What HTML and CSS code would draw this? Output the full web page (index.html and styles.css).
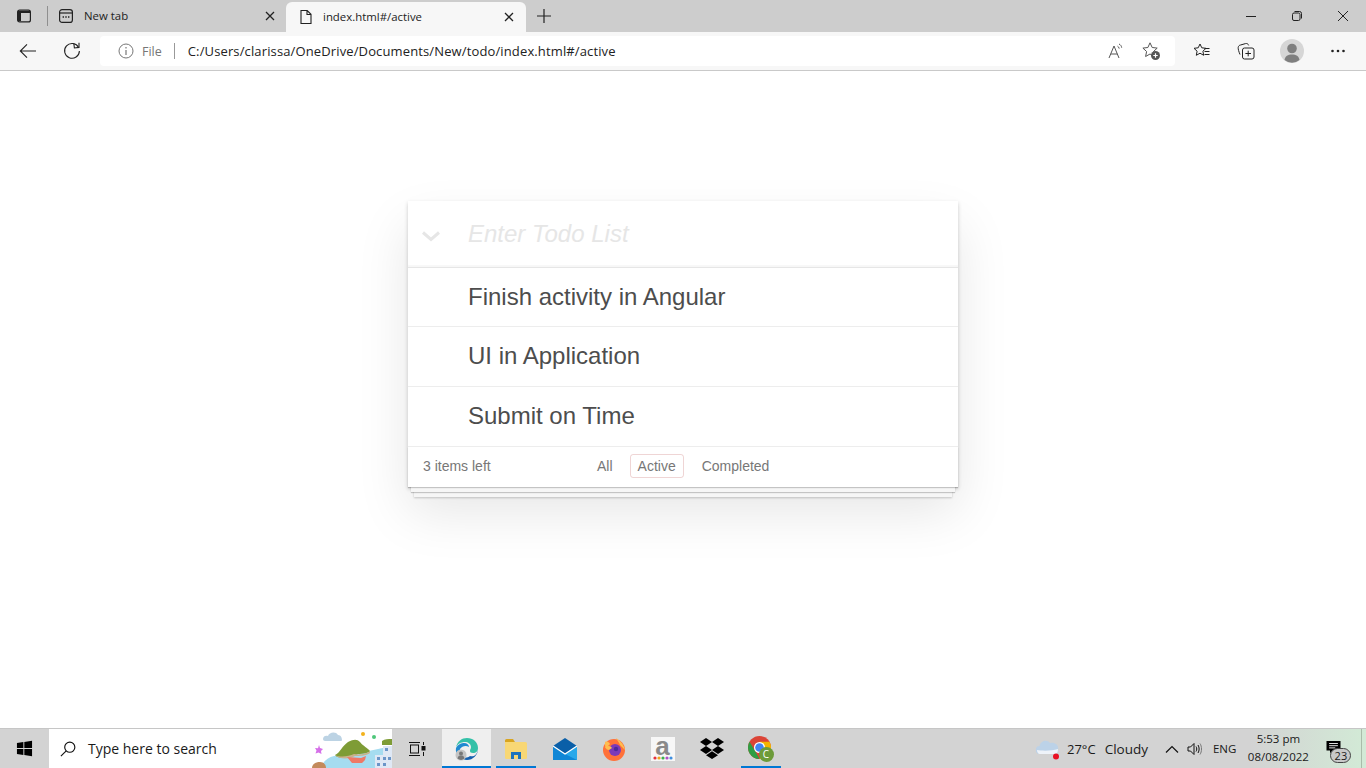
FILE: index.html
```html
<!DOCTYPE html>
<html lang="en">
<head>
  <meta charset="UTF-8">
  <title>index.html#/active</title>
  <link rel="stylesheet" href="styles.css">
</head>
<body>

  <div class="tabbar">
    <div class="tab-tools">
      <svg width="16" height="16" viewBox="0 0 16 16" fill="none" stroke="#222" stroke-width="1.2"><rect x="1.6" y="2.1" width="12.8" height="11.8" rx="2"/><path d="M2 3h12v2H2zM2 5h3v8H2z" fill="#222" stroke="none"/></svg>
    </div>
    <div class="tab-sep"></div>
    <div class="tab">
      <svg width="16" height="16" viewBox="0 0 16 16" fill="none" stroke="#222" stroke-width="1.2"><rect x="1.6" y="1.6" width="12.8" height="12.8" rx="2.5"/><path d="M1.6 5h12.8"/><path d="M4.6 9h1.4M7.3 9h1.4M10 9h1.4" stroke-width="1.6"/></svg>
      <span class="tab-name">New tab</span>
      <svg class="tab-x" width="10" height="10" viewBox="0 0 10 10" stroke="#222" stroke-width="1.3"><path d="M1 1l8 8M9 1l-8 8"/></svg>
    </div>
    <div class="tab active">
      <svg width="16" height="16" viewBox="0 0 16 16" fill="none" stroke="#222" stroke-width="1.1"><path d="M3 1.5h6.2L13 5.3v9.2H3zM9 1.5v4h4"/></svg>
      <span class="tab-name">index.html#/active</span>
      <svg class="tab-x" width="10" height="10" viewBox="0 0 10 10" stroke="#222" stroke-width="1.3"><path d="M1 1l8 8M9 1l-8 8"/></svg>
    </div>
    <svg class="tab-new" width="16" height="16" viewBox="0 0 16 16" stroke="#222" stroke-width="1.2"><path d="M8 1v14M1 8h14"/></svg>
    <div class="win-btns">
      <svg width="12" height="12" viewBox="0 0 12 12" stroke="#222" fill="none"><path d="M1 6.5h10"/></svg>
      <svg width="12" height="12" viewBox="0 0 12 12" stroke="#222" fill="none"><rect x="1.5" y="3" width="7.5" height="7.5" rx="1.5"/><path d="M3.5 1.5h5a2 2 0 0 1 2 2v5"/></svg>
      <svg width="12" height="12" viewBox="0 0 12 12" stroke="#222" fill="none"><path d="M1 1l10 10M11 1L1 11"/></svg>
    </div>
  </div>

  <div class="toolbar">
    <button class="nav-btn">
      <svg width="18" height="18" viewBox="0 0 18 18" fill="none" stroke="#222" stroke-width="1.1"><path d="M17 9H1.5M8 2.3L1.3 9 8 15.7"/></svg>
    </button>
    <button class="nav-btn">
      <svg width="18" height="18" viewBox="0 0 18 18" fill="none" stroke="#222" stroke-width="1.1"><path d="M15.6 5.5A7.4 7.4 0 1 0 16.4 9"/><path d="M10.8 1.2l.6 4.8 4.6-.6V.7"/></svg>
    </button>
    <div class="addressbar">
      <svg class="info" width="16" height="16" viewBox="0 0 16 16" fill="none" stroke="#777"><circle cx="8" cy="8" r="7"/><path d="M8 7v5M8 4v1.6" stroke-width="1.2"/></svg>
      <span class="file">File</span>
      <span class="addr-sep"></span>
      <span class="url">C:/Users/clarissa/OneDrive/Documents/New/todo/index.html#/active</span>
      <svg class="read" width="16" height="16" viewBox="0 0 16 16" fill="none" stroke="#555"><path d="M1 15L6 3l5 12M2.8 11h6.4"/><path d="M9.500 3.200c1 .5 1.500 1.200 1.700 2.400M11 1c1.600.8 2.500 2 2.700 3.700"/></svg>
      <svg class="star-add" width="20" height="20" viewBox="0 0 20 20" fill="none" stroke="#555"><path d="M9 1.800l2.200 4.700 5 .6-3.700 3.400 1 5-4.500-2.500-4.400 2.500 1-5L1.900 7.100l5-.6z"/><circle cx="14.500" cy="14.500" r="4.500" fill="#555" stroke="none"/><path d="M12.300 14.500h4.400M14.500 12.300v4.400" stroke="#fff" stroke-width="1.200"/></svg>
    </div>
    <div class="tool-icons">
      <svg width="18" height="18" viewBox="0 0 18 18" fill="none" stroke="#222"><path d="M7 2l1.800 3.800 4.200.5-3.100 2.900.8 4.100L7 11.200l-3.700 2.100.8-4.100L1 6.300l4.200-.5z"/><path d="M11.500 6.500h5M11.500 9.500h5M11.500 12.500h5"/></svg>
      <svg width="18" height="18" viewBox="0 0 18 18" fill="none" stroke="#222"><path d="M3 12.500C1.800 9.500 1 7 1.200 5.500c.2-1.500 1-2.200 2.300-2.500l5-1.400c1.500-.3 2.600.2 3.200 1.800"/><rect x="5.500" y="6" width="11.500" height="11" rx="2"/><path d="M11.200 8.700v5.600M8.400 11.500H14"/></svg>
      <svg class="avatar" width="24" height="24" viewBox="0 0 24 24"><circle cx="12" cy="12" r="12" fill="#d6d6d6"/><circle cx="12" cy="9.500" r="4.800" fill="#7f7f7f"/><path d="M4.500 21c.6-3.800 3.400-5.500 7.500-5.500s6.900 1.700 7.500 5.500A12 12 0 0 1 4.500 21z" fill="#7f7f7f"/></svg>
      <svg width="16" height="16" viewBox="0 0 16 16" fill="#222"><circle cx="2.500" cy="8" r="1.300"/><circle cx="8" cy="8" r="1.300"/><circle cx="13.500" cy="8" r="1.300"/></svg>
    </div>
  </div>

  <main class="page">
    <section class="todoapp">
      <header class="todo-head">
        <svg class="toggle-all" width="20" height="11" viewBox="0 0 20 11" fill="none" stroke="#e6e6e6" stroke-width="3"><path d="M2 1.500l8 7 8-7"/></svg>
        <span class="placeholder">Enter Todo List</span>
      </header>
      <ul class="todo-list">
        <li>Finish activity in Angular</li>
        <li>UI in Application</li>
        <li>Submit on Time</li>
      </ul>
      <footer class="todo-foot">
        <span class="count">3 items left</span>
        <ul class="filters">
          <li><a href="#/">All</a></li>
          <li><a href="#/active" class="selected">Active</a></li>
          <li><a href="#/completed">Completed</a></li>
        </ul>
      </footer>
    </section>
  </main>

  <div class="taskbar">
    <div class="start">
      <svg width="17" height="17" viewBox="0 0 18 18" fill="#000"><path d="M1 3.200l6.800-1v6.300H1zM8.800 2l8.200-1.200v7.700H8.800zM1 9.500h6.800v6.300l-6.800-1zM8.800 9.500H17v7.700L8.800 16z"/></svg>
    </div>
    <div class="search">
      <svg width="16" height="16" viewBox="0 0 18 18" fill="none" stroke="#111" stroke-width="1.300"><circle cx="11" cy="7" r="5.700"/><path d="M7 11.200L1 17"/></svg>
      <span class="search-text">Type here to search</span>
      <svg class="search-art" width="84" height="39" viewBox="0 0 84 39">
        <path d="M15 10c0-3 3-4 5-3 1-4 8-5 10-1 3 0 4 3 4 5 0 1-1 1-2 1H17c-1 0-2-1-2-2z" fill="#bcd3e4"/>
        <path d="M11 16l1 3 3 1-2 2 .5 3-3-1.500-3 1 1-3-1.500-2.500 3 .2z" fill="#d56fe8"/>
        <circle cx="55" cy="5" r="2" fill="#f2b21c"/><circle cx="66" cy="8" r="2" fill="#4ec77a"/>
        <path d="M12 39c3-6 8-11 14-12l30-4 28-6v22z" fill="#a5dcf0"/>
        <path d="M27 26c5-2 7-9 13-13 6-3 9-3 12 0 3 4 8 6 10 9-1 2-7 3-12 3-3 2-8 3-12 3-4 1-9 1-11-2z" fill="#7e9c36"/>
        <path d="M27 26c6 3 14 1 19-1 5 1 13 0 16-3v2c-4 3-11 3-15 3-5 3-15 4-20-1z" fill="#c9b28c"/>
        <path d="M39 28l14 1 5-2-1 4-3 3H44z" fill="#ee7966"/>
        <path d="M74 12c3-2 6-2 10-2v6H74z" fill="#7e9c36"/>
        <path d="M4 39c0-4 4-6 8-6s6 3 6 6z" fill="#c38a5c"/>
        <path d="M67 26h8v-9h9v22H67z" fill="#dfe8f5"/><path d="M77 19h3v3h-3zM69 28h3v3h-3zM75 28h3v3h-3zM80 28h3v3h-3zM69 34h3v3h-3zM75 34h3v3h-3z" fill="#6b95c8"/>
      </svg>
    </div>
    <div class="taskview">
      <svg width="18" height="16" viewBox="0 0 18 16" fill="none" stroke="#111"><path d="M1 1.500h11M1 14.500h11"/><rect x="2.500" y="4" width="8" height="8"/><path d="M15.500 1v3M15.500 11v4"/><rect x="14" y="5.500" width="3" height="3.500" fill="#111"/></svg>
    </div>
    <div class="task-slot current">
      <svg width="24" height="24" viewBox="0 0 24 24">
        <path d="M1 11C2 4 7 1 12 1c6 0 11 4 11 10 0 3-2 5-5 5-2 0-3-1-3-2 0-2 1-2 1-4 0-3-3-5-6-5-4 0-8 2-9 6z" fill="#34c1a8"/>
        <path d="M23 12c0 6-5 11-11 11-3 0-5-1-6-3 3 1 7 1 9-1 3 1 7 0 8-7z" fill="#1560b0"/>
        <path d="M1 11c2-4 6-5 8-5 3 0 5 2 5 4-3-2-7-1-9 2-1 3 0 8 4 10-5 0-9-5-8-11z" fill="#1f8ad0"/>
        <circle cx="6" cy="18" r="5.500" fill="#c4c4c4"/><circle cx="6" cy="16.500" r="2" fill="#777"/><path d="M2.500 21.500c.4-2.500 1.700-3 3.500-3s3.100.5 3.500 3a5.500 5.500 0 0 1-7 0z" fill="#777"/>
      </svg>
    </div>
    <div class="task-slot open">
      <svg width="22" height="20" viewBox="0 0 22 20">
        <path d="M0 1.500A1.500 1.500 0 0 1 1.500 0H8l2 3H0z" fill="#d9a520"/>
        <path d="M0 3h20.500A1.500 1.500 0 0 1 22 4.500v14a1.500 1.500 0 0 1-1.500 1.500h-19A1.500 1.500 0 0 1 0 18.500z" fill="#f8d775"/>
        <path d="M6 13h10v7h-3v-4H9v4H6z" fill="#1d73bd"/>
      </svg>
    </div>
    <div class="task-slot">
      <svg width="24" height="22" viewBox="0 0 24 22">
        <path d="M0 8l12-8 12 8-12 8z" fill="#0a5fa8"/>
        <path d="M0 8l12 8 12-8v14H0z" fill="#28a8ea"/>
        <path d="M0 22V8l12 8 12 6z" fill="#0f86d6"/>
        <path d="M0 8l12 8 12-8" fill="none" stroke="#fff" stroke-width="1.200"/>
      </svg>
    </div>
    <div class="task-slot">
      <svg width="24" height="24" viewBox="0 0 24 24">
        <circle cx="12" cy="13" r="11" fill="#ff7139"/>
        <path d="M3 5c0 3 0 5 1 6l4-4C7 5 5 4 3 5z" fill="#ffbd4f"/>
        <path d="M14 1c3 2 8 6 9 12L18 8c-1-3-3-5-4-7z" fill="#ffbd4f"/>
        <circle cx="13" cy="13" r="6" fill="#7b3ab8"/>
        <path d="M3 10c3-2 6-1 7 1l-3 2c-2 0-3-1-4-3z" fill="#ffbd4f"/>
        <circle cx="14" cy="12" r="2.200" fill="#4b2a9c"/>
      </svg>
    </div>
    <div class="task-slot">
      <div class="amazon">
        <span>a</span>
        <svg class="dots" width="20" height="4" viewBox="0 0 20 4"><circle cx="2" cy="2" r="1.600" fill="#e6323c"/><circle cx="6" cy="2" r="1.600" fill="#f2a51c"/><circle cx="10" cy="2" r="1.600" fill="#3fb04f"/><circle cx="14" cy="2" r="1.600" fill="#b04fc8"/><circle cx="18" cy="2" r="1.600" fill="#3f8fe0"/></svg>
      </div>
    </div>
    <div class="task-slot">
      <svg width="24" height="21" viewBox="0 0 24 21" fill="#000"><path d="M6 0l6 4-6 4-6-4zM18 0l6 4-6 4-6-4zM0 12l6-4 6 4-6 4zM24 12l-6-4-6 4 6 4zM6 17.300l6-4 6 4-6 3.700z"/></svg>
    </div>
    <div class="task-slot open">
      <svg width="26" height="26" viewBox="0 0 26 26">
        <circle cx="11.500" cy="11.500" r="11.500" fill="#db4437"/>
        <path d="M11.500 23A11.500 11.500 0 0 1 1.500 5.800l5.500 9 4.500 8.200z" fill="#2f9e44"/>
        <path d="M11.500 23a11.500 11.500 0 0 0 10-17.200H11.500l5 6z" fill="#f4b400"/>
        <circle cx="11.500" cy="11.500" r="5.500" fill="#fff"/><circle cx="11.500" cy="11.500" r="4.300" fill="#4285f4"/>
        <circle cx="18.500" cy="18.500" r="7.500" fill="#6d9b3a"/>
      </svg>
      <span class="chrome-c">C</span>
    </div>

    <div class="tray">
      <div class="weather">
        <svg width="24" height="22" viewBox="0 0 24 22"><path d="M4 16a4 4 0 0 1-.5-8C4.500 3 11 1 14 5c5-1 9 2 8 7 1 3-1 4-3 4z" fill="#bcd2e8"/><path d="M1 12c5 1 15 1 21-1 0 3-1 5-3 5H4c-2 0-3-2-3-4z" fill="#eef3f9"/><circle cx="20" cy="18.500" r="3" fill="#e81123"/></svg>
        <span class="temp">27°C</span>
        <span class="cond">Cloudy</span>
      </div>
      <svg class="tray-caret" width="14" height="8" viewBox="0 0 14 8" fill="none" stroke="#111" stroke-width="1.200"><path d="M1 7.500l6-6 6 6"/></svg>
      <svg class="tray-sound" width="16" height="14" viewBox="0 0 16 14" fill="none" stroke="#111"><path d="M1 5h2.500L7 1.500v11L3.500 9H1z"/><path d="M9 4.500c1 1.500 1 3.500 0 5M11 3c1.500 2.500 1.500 5.500 0 8" /><path d="M13 1.500c2 3 2 8 0 11" stroke="#777"/></svg>
      <span class="tray-lang">ENG</span>
      <div class="clock">
        <span>5:53 pm</span>
        <span>08/08/2022</span>
      </div>
      <div class="notif">
        <svg width="17" height="14" viewBox="0 0 18 16"><path d="M1 1h16v11h-9l-3 3v-3H1z" fill="#000"/><path d="M4 4h10M4 6.500h10M4 9h7" stroke="#fff"/></svg>
        <span class="notif-count">23</span>
      </div>
      <div class="show-desktop"></div>
    </div>
  </div>

</body>
</html>
```

FILE: styles.css
```css
* {
  box-sizing: border-box;
}

html, body {
  margin: 0;
  height: 100%;
}

body {
  width: 1366px;
  height: 768px;
  overflow: hidden;
  display: flex;
  flex-direction: column;
  background: #fff;
  font-family: "Open Sans", "Noto Sans", sans-serif;
  color: #222;
}

ul {
  list-style: none;
  margin: 0;
  padding: 0;
}

svg {
  display: block;
  flex: none;
}

/* browser tabs */
.tabbar {
  height: 32px;
  flex: none;
  display: flex;
  align-items: flex-end;
  background: #cdcdcd;
}

.tab-tools {
  width: 47px;
  height: 32px;
  display: flex;
  align-items: center;
  padding-left: 16px;
}

.tab-sep {
  width: 1px;
  height: 20px;
  margin-bottom: 6px;
  background: #8f8f8f;
}

.tab {
  width: 237px;
  height: 32px;
  display: flex;
  align-items: center;
  padding: 0 10px;
  font-size: 11.4px;
}

.tab.active {
  width: 240px;
  height: 30px;
  margin-left: 1px;
  padding: 0 12px;
  background: #f7f7f7;
  border-radius: 6px 6px 0 0;
}

.tab-name {
  margin: 0 0 2px 10px;
  flex: 1;
}

.tab.active .tab-name {
  margin-left: 9px;
}

.tab-new {
  margin: 0 0 8px 10px;
}

.win-btns {
  margin-left: auto;
  height: 32px;
  display: flex;
  align-items: center;
  gap: 34px;
  padding-right: 17px;
}

/* address row */
.toolbar {
  height: 39px;
  flex: none;
  display: flex;
  align-items: center;
  background: #f7f7f7;
  border-bottom: 1px solid #c9c9c9;
}

.nav-btn {
  width: 44px;
  height: 30px;
  padding: 0;
  border: 0;
  background: none;
  display: flex;
  align-items: center;
  justify-content: center;
}

.nav-btn:first-child {
  margin-left: 6px;
}

.addressbar {
  width: 1075px;
  height: 30px;
  margin-left: 6px;
  display: flex;
  align-items: center;
  padding-left: 18px;
  background: #fff;
  border-radius: 4px;
}

.file {
  margin-left: 8px;
  font-size: 12.5px;
  color: #767676;
}

.addr-sep {
  width: 1px;
  height: 16px;
  margin: 0 13px 0 12px;
  background: #999;
}

.url {
  font-size: 13px;
  letter-spacing: .13px;
  color: #222;
}

.read {
  margin-left: auto;
}

.star-add {
  margin: 0 14px 0 17px;
}

.tool-icons {
  display: flex;
  align-items: center;
  margin-left: 18px;
}

.tool-icons svg:nth-child(2) {
  margin-left: 26px;
}

.tool-icons .avatar {
  margin-left: 25px;
}

.tool-icons svg:nth-child(4) {
  margin-left: 26px;
}

/* the todo card */
.page {
  flex: 1;
  padding-top: 130px;
}

.todoapp {
  position: relative;
  z-index: 0;
  width: 550px;
  margin-left: 408px;
  background: #fff;
  font-family: "Liberation Sans", Arial, sans-serif;
  box-shadow: 0 2px 4px 0 rgba(0, 0, 0, .2), 0 25px 50px 0 rgba(0, 0, 0, .1);
}

.todo-head {
  height: 66px;
  display: flex;
  align-items: center;
  padding-left: 13px;
  box-shadow: inset 0 -2px 1px rgba(0, 0, 0, .03);
}

.toggle-all {
  margin-top: 4px;
}

.placeholder {
  margin-left: 27px;
  font-size: 24px;
  font-style: italic;
  color: #e6e6e6;
}

.todo-list {
  border-top: 1px solid #e6e6e6;
}

.todo-list li {
  height: 60px;
  display: flex;
  align-items: center;
  padding: 0 0 2px 60px;
  font-size: 24px;
  color: #4d4d4d;
  border-bottom: 1px solid #ededed;
}

.todo-list li:nth-child(1) {
  height: 59px;
  padding-bottom: 0;
}

.todo-foot {
  position: relative;
  height: 40px;
  display: flex;
  align-items: center;
  padding: 0 15px 3px;
  font-size: 14px;
  color: #777;
}

.todo-foot::before {
  content: "";
  position: absolute;
  left: 0;
  right: 0;
  bottom: 0;
  height: 40px;
  pointer-events: none;
  z-index: -1;
  box-shadow: 0 1px 1px rgba(0, 0, 0, .2), 0 8px 0 -3px #f6f6f6, 0 9px 1px -3px rgba(0, 0, 0, .2), 0 16px 0 -6px #f6f6f6, 0 17px 2px -6px rgba(0, 0, 0, .2);
}

.count {
  width: 166px;
}

.filters {
  display: flex;
  gap: 9px;
}

.filters li:last-child {
  margin-left: 1px;
}

.filters a {
  display: block;
  padding: 3px 7px;
  border: 1px solid transparent;
  border-radius: 3px;
  color: inherit;
  text-decoration: none;
}

.filters a.selected {
  border-color: rgba(175, 47, 47, .2);
}

/* windows taskbar */
.taskbar {
  height: 40px;
  flex: none;
  display: flex;
  align-items: stretch;
  background: #d3d3d3;
  border-top: 1px solid #c6c6c6;
}

.start {
  width: 49px;
  display: flex;
  align-items: center;
  padding-left: 16px;
}

.search {
  position: relative;
  width: 343px;
  display: flex;
  align-items: center;
  padding-left: 11px;
  background: #fff;
  overflow: hidden;
}

.search-text {
  margin-left: 12px;
  font-size: 14px;
  color: #1a1a1a;
}

.search-art {
  position: absolute;
  right: 0;
  top: 0;
}

.taskview {
  width: 50px;
  display: flex;
  align-items: center;
  justify-content: center;
}

.task-slot {
  position: relative;
  width: 49px;
  display: flex;
  align-items: center;
  justify-content: center;
}

.task-slot.current {
  background: #efefef;
  box-shadow: inset 0 -2px 0 #0078d4;
}

.task-slot.open::after {
  content: "";
  position: absolute;
  left: 5px;
  right: 4px;
  bottom: 0;
  height: 2px;
  background: #0078d4;
}

.amazon {
  position: relative;
  width: 24px;
  height: 24px;
  background: #f7f7f7;
  text-align: center;
  font-family: "Liberation Sans", Arial, sans-serif;
  font-size: 26px;
  font-weight: bold;
  line-height: 19px;
  color: #8a8a8a;
}

.dots {
  position: absolute;
  left: 2px;
  bottom: 1px;
}

.chrome-c {
  position: absolute;
  left: 25px;
  top: 18px;
  width: 10px;
  font-size: 10px;
  line-height: 14px;
  text-align: center;
  color: #fff;
}

.tray {
  margin-left: auto;
  width: 330px;
  display: flex;
  align-items: center;
  background: linear-gradient(90deg, #d3d3d3 0, #d3d3d3 65%, #d2ead6 100%);
  font-size: 13px;
  color: #1a1a1a;
}

.weather {
  display: flex;
  align-items: center;
}

.temp {
  margin-left: 7px;
}

.cond {
  margin-left: 9px;
  font-size: 13.5px;
}

.tray-caret {
  margin-left: 17px;
}

.tray-sound {
  margin-left: 8px;
}

.tray-lang {
  margin-left: 10px;
  font-size: 11.5px;
}

.clock {
  width: 70px;
  margin: -2px 0 0 7px;
  display: flex;
  flex-direction: column;
  align-items: center;
  font-size: 11.5px;
  line-height: 18px;
}

.notif {
  position: relative;
  margin-left: 12px;
  width: 30px;
  height: 26px;
}

.notif svg {
  margin-top: 4px;
}

.notif-count {
  position: absolute;
  left: 5px;
  top: 12px;
  width: 21px;
  height: 15px;
  border: 1px solid #444;
  border-radius: 8px;
  background: #c9c9c9;
  font-size: 11px;
  line-height: 13px;
  text-align: center;
}

.show-desktop {
  width: 5px;
  height: 100%;
  margin-left: auto;
  border-left: 1px solid #a9bcaa;
}
```
